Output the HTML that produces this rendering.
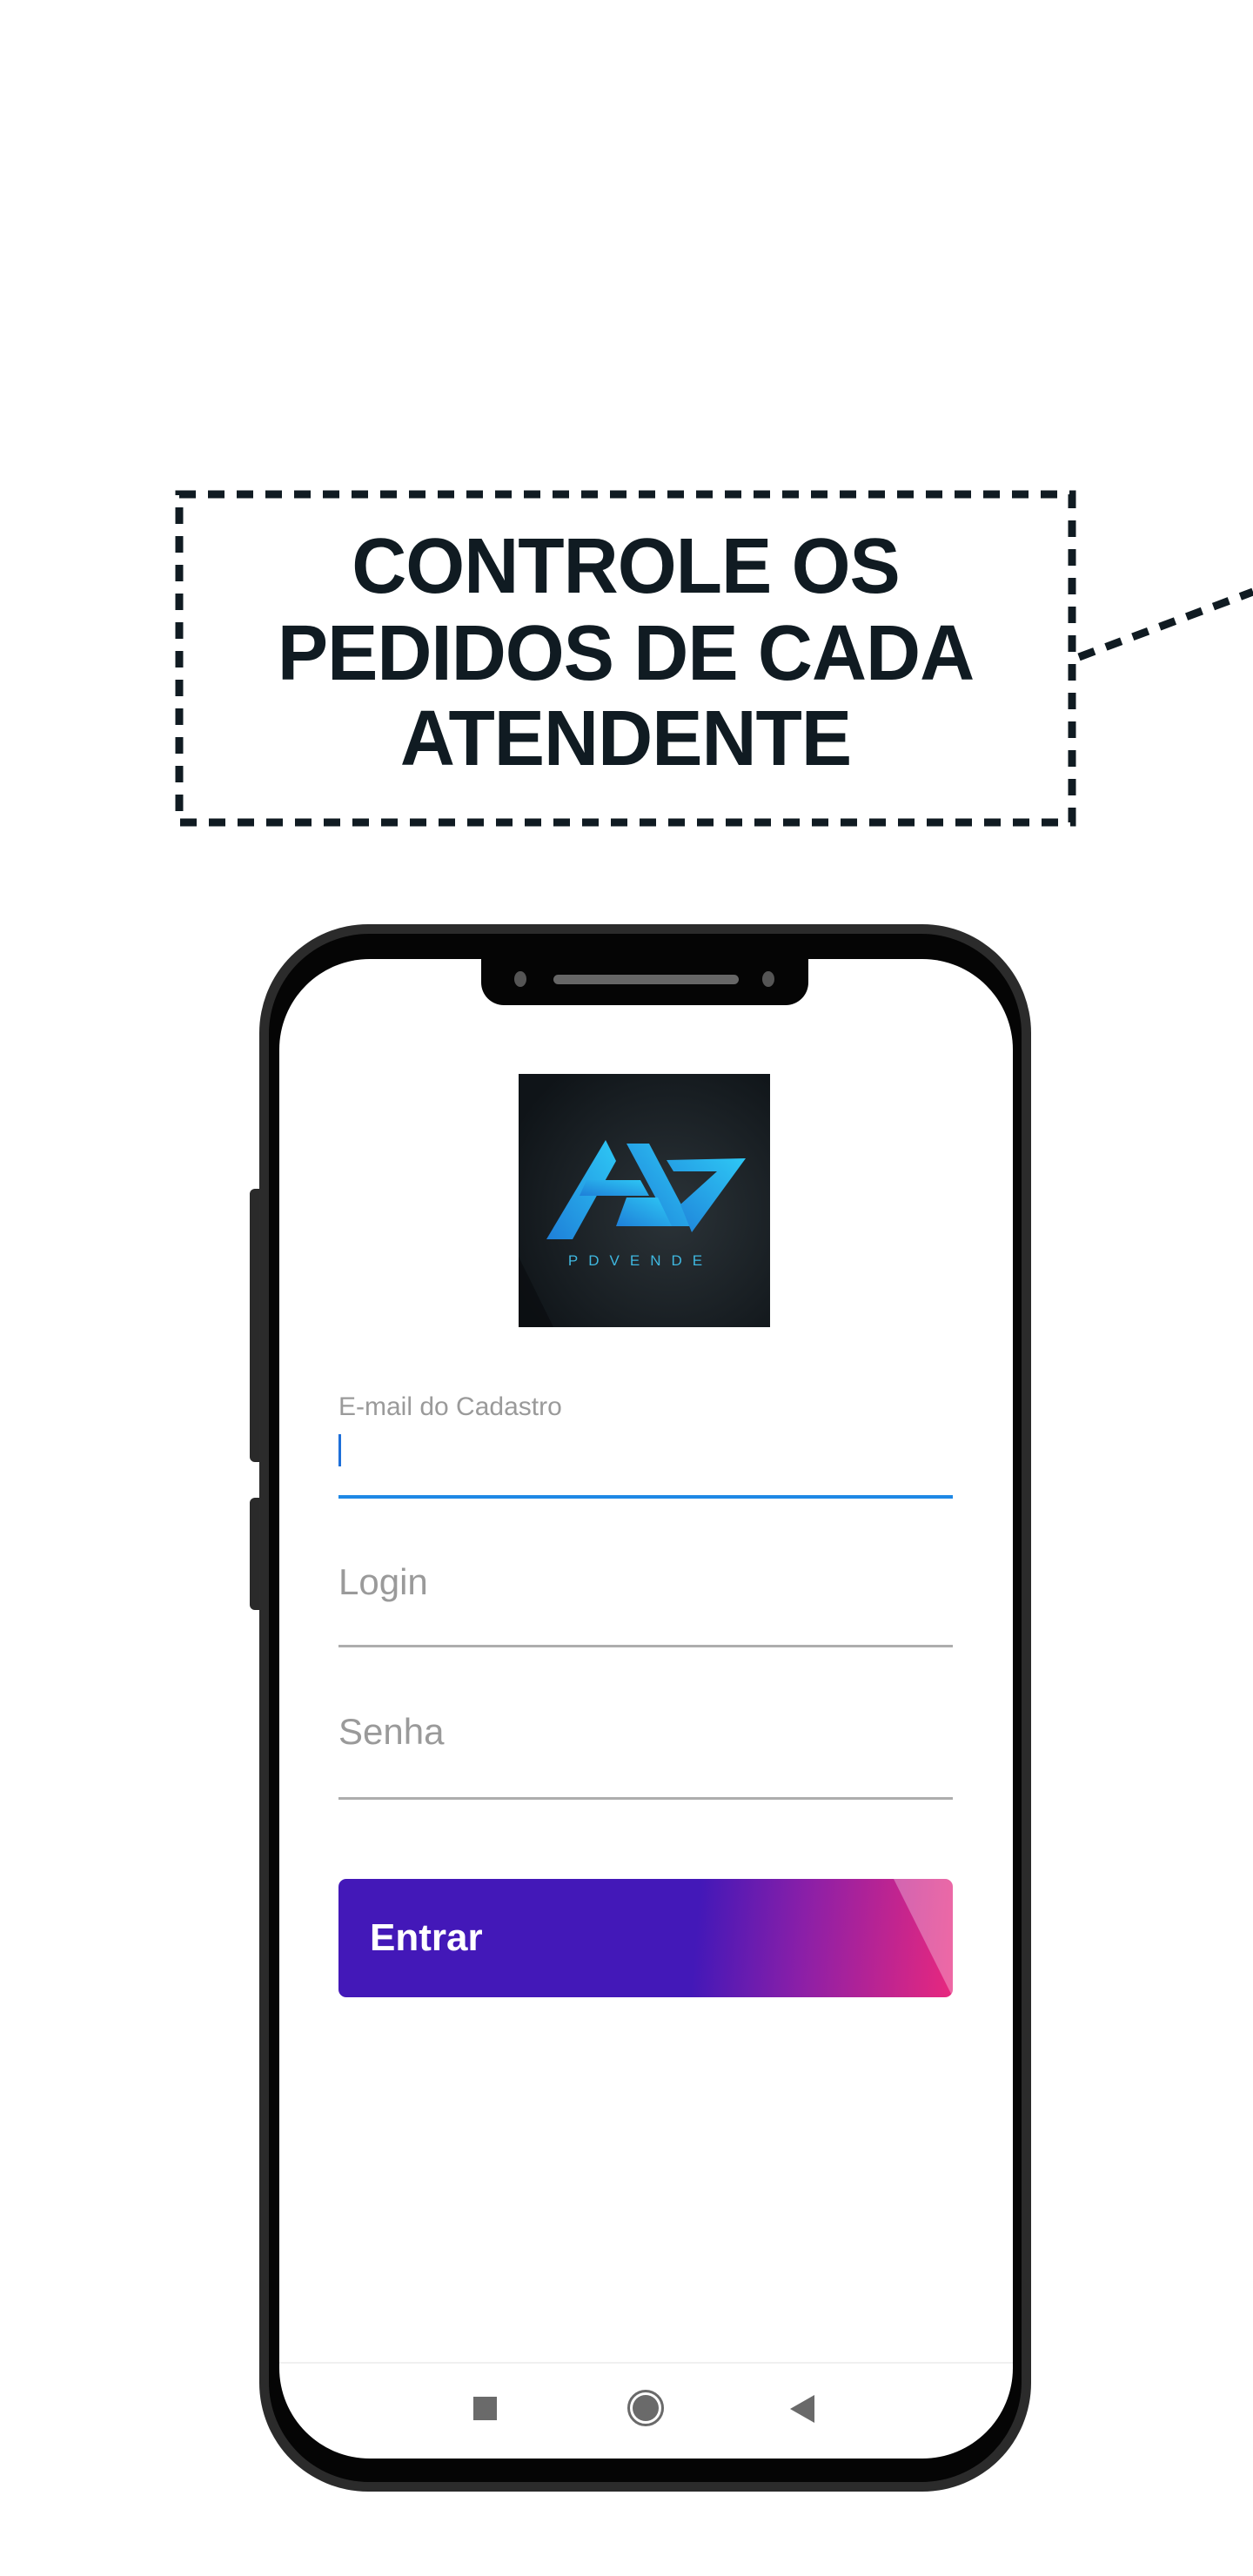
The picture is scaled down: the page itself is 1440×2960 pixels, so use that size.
<!DOCTYPE html>
<html><head><meta charset="utf-8"><style>
*{margin:0;padding:0;box-sizing:border-box}
body{width:1440px;height:2960px;background:#fff;position:relative;overflow:hidden;font-family:"Liberation Sans",sans-serif}
.abs{position:absolute}
.t{position:absolute;left:202px;width:1034px;text-align:center;font-weight:bold;font-size:90px;color:#101b22;line-height:100px;letter-spacing:-1px;transform:scaleX(0.97)}
</style></head><body>
<svg class="abs" style="left:0;top:0" width="1440" height="1100">
<rect x="206" y="568" width="1026" height="377" fill="none" stroke="#101b22" stroke-width="9" stroke-dasharray="19 14"/>
<line x1="1240" y1="755" x2="1440" y2="680" stroke="#101b22" stroke-width="9" stroke-dasharray="19 14"/>
</svg>
<div class="t" style="top:601px">CONTROLE OS</div>
<div class="t" style="top:701px">PEDIDOS DE CADA</div>
<div class="t" style="top:799px">ATENDENTE</div>

<div class="abs" style="left:287px;top:1366px;width:14px;height:314px;background:#2a2a2a;border-radius:6px 0 0 6px"></div>
<div class="abs" style="left:287px;top:1721px;width:14px;height:129px;background:#2a2a2a;border-radius:6px 0 0 6px"></div>
<div class="abs" style="left:298px;top:1062px;width:887px;height:1801px;border-radius:125px;background:#2b2b2b"></div>
<div class="abs" style="left:309px;top:1073px;width:865px;height:1779px;border-radius:115px;background:#050505"></div>
<div class="abs" style="left:321px;top:1102px;width:843px;height:1723px;border-radius:104px;background:#fff;overflow:hidden">
  <div class="abs" style="left:0;top:1612px;width:843px;height:2px;background:#f0f0f0"></div>
</div>
<div class="abs" style="left:553px;top:1090px;width:376px;height:65px;background:#050505;border-radius:0 0 26px 26px"></div>
<div class="abs" style="left:636px;top:1120px;width:213px;height:11px;background:#666;border-radius:6px"></div>
<div class="abs" style="left:591px;top:1116px;width:14px;height:18px;background:#555;border-radius:50%"></div>
<div class="abs" style="left:876px;top:1116px;width:14px;height:18px;background:#555;border-radius:50%"></div>

<svg class="abs" style="left:596px;top:1234px" width="289" height="291" viewBox="0 0 289 291">
<defs>
<radialGradient id="bg" cx="0.6" cy="0.55" r="0.7"><stop offset="0" stop-color="#2b3338"/><stop offset="1" stop-color="#0f1418"/></radialGradient>
<linearGradient id="bl" x1="0" y1="1" x2="1" y2="0"><stop offset="0" stop-color="#1e7fd8"/><stop offset="1" stop-color="#2ec8f5"/></linearGradient>
</defs>
<rect width="289" height="291" fill="url(#bg)"/>
<polygon points="0,210 0,291 40,291" fill="#0a0d10" opacity="0.7"/>
<polygon points="32,190 100,76 112,100 62,190" fill="url(#bl)"/>
<polygon points="78,122 140,122 150,140 70,140" fill="url(#bl)"/>
<polygon points="124,80 150,80 200,175 175,175" fill="url(#bl)"/>
<polygon points="112,175 124,142 160,142 176,175" fill="url(#bl)"/>
<polygon points="170,99 261,97 199,182 186,150 228,112 178,112" fill="url(#bl)"/>
<text x="140" y="220" text-anchor="middle" font-family="Liberation Sans,sans-serif" font-size="17" letter-spacing="12" fill="#3fb8e0">PDVENDE</text>
</svg>

<div class="abs" style="left:389px;top:1600px;font-size:30px;color:#9a9a9a">E-mail do Cadastro</div>
<div class="abs" style="left:389px;top:1648px;width:3px;height:37px;background:#1e6fd9"></div>
<div class="abs" style="left:389px;top:1718px;width:706px;height:4px;background:#1e88e5"></div>
<div class="abs" style="left:389px;top:1794px;font-size:42px;color:#9a9a9a">Login</div>
<div class="abs" style="left:389px;top:1890px;width:706px;height:3px;background:#adadad"></div>
<div class="abs" style="left:389px;top:1966px;font-size:42px;color:#9a9a9a">Senha</div>
<div class="abs" style="left:389px;top:2065px;width:706px;height:3px;background:#adadad"></div>

<div class="abs" style="left:389px;top:2159px;width:706px;height:136px;border-radius:9px;overflow:hidden;background:linear-gradient(95deg,#4318b8 0%,#4318b8 58%,#8a1fa8 75%,#e8287e 100%)">
  <svg class="abs" style="left:0;top:0" width="706" height="136"><polygon points="638,0 706,0 706,136" fill="#fff" opacity="0.3"/></svg>
  <div class="abs" style="left:36px;top:44px;font-size:44px;font-weight:bold;color:#fff;line-height:48px">Entrar</div>
</div>

<div class="abs" style="left:544px;top:2754px;width:27px;height:27px;background:#6a6a6a"></div>
<div class="abs" style="left:721px;top:2746px;width:42px;height:42px;border-radius:50%;border:3px solid #6a6a6a;padding:3px"><div style="width:30px;height:30px;border-radius:50%;background:#6a6a6a"></div></div>
<svg class="abs" style="left:908px;top:2752px" width="30" height="32"><polygon points="0,16 28,0 28,32" fill="#6a6a6a"/></svg>
</body></html>
